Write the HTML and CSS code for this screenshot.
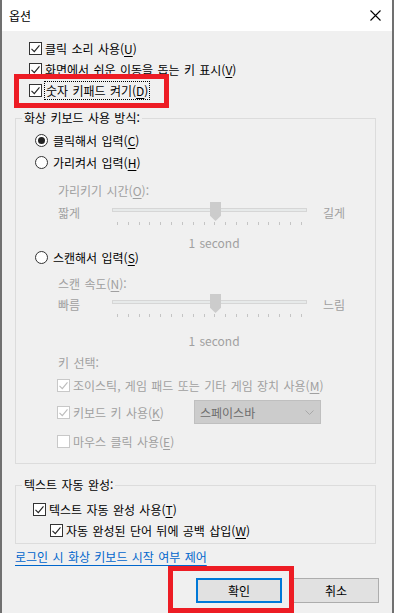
FILE: index.html
```html
<!DOCTYPE html>
<html lang="ko">
<head>
<meta charset="UTF-8">
<meta name="viewport" content="width=device-width, initial-scale=1.0">
<title>옵션</title>
<link rel="stylesheet" href="styles.css">
</head>
<body>
<div class="window">
  <div class="titlebar">
    <span class="title">옵션</span>
    <svg class="close" width="11" height="11" viewBox="0 0 11 11"><path d="M0.5 0.5L10.5 10.5M10.5 0.5L0.5 10.5" stroke="#000" stroke-width="1.1" fill="none"/></svg>
  </div>

  <div class="content">
    <div class="top-opts">
      <label class="opt"><span class="cb"><svg viewBox="0 0 13 13"><path d="M2.5 6.8L5.3 9.6L10.5 3.4"/></svg></span><span>클릭 소리 사용(<u>U</u>)</span></label>
      <label class="opt"><span class="cb"><svg viewBox="0 0 13 13"><path d="M2.5 6.8L5.3 9.6L10.5 3.4"/></svg></span><span>화면에서 쉬운 이동을 돕는 키 표시(<u>V</u>)</span></label>
      <label class="opt"><span class="cb"><svg viewBox="0 0 13 13"><path d="M2.5 6.8L5.3 9.6L10.5 3.4"/></svg></span><span class="focus">숫자 키패드 켜기(<u>D</u>)</span></label>
    </div>

    <fieldset class="group group-mode">
      <legend>화상 키보드 사용 방식:</legend>
      <label class="radio-row r1"><span class="radio on"></span><span>클릭해서 입력(<u>C</u>)</span></label>
      <label class="radio-row r2"><span class="radio"></span><span>가리켜서 입력(<u>H</u>)</span></label>
      <div class="sub-label hover-label">가리키기 시간(<u>O</u>):</div>
      <div class="slider-row">
        <span class="end">짧게</span>
        <div class="slider">
          <div class="track"></div>
          <div class="ticks"><i></i><i></i><i></i><i></i><i></i><i></i><i></i><i></i><i></i><i></i><i></i><i></i><i></i><i></i><i></i><i></i><i></i><i></i></div>
          <div class="thumb"></div>
        </div>
        <span class="end end-right">길게</span>
      </div>
      <div class="value value-1">1 second</div>
      <label class="radio-row r3"><span class="radio"></span><span>스캔해서 입력(<u>S</u>)</span></label>
      <div class="sub-label scan-label">스캔 속도(<u>N</u>):</div>
      <div class="slider-row">
        <span class="end">빠름</span>
        <div class="slider">
          <div class="track"></div>
          <div class="ticks"><i></i><i></i><i></i><i></i><i></i><i></i><i></i><i></i><i></i><i></i><i></i><i></i><i></i><i></i><i></i><i></i><i></i><i></i></div>
          <div class="thumb"></div>
        </div>
        <span class="end end-right">느림</span>
      </div>
      <div class="value value-2">1 second</div>
      <div class="sub-label key-label">키 선택:</div>
      <label class="dis-row joy-row"><span class="cb dis"><svg viewBox="0 0 13 13"><path d="M2.5 6.8L5.3 9.6L10.5 3.4"/></svg></span><span>조이스틱, 게임 패드 또는 기타 게임 장치 사용(<u>M</u>)</span></label>
      <div class="dis-row kb-row">
        <label class="kb-label"><span class="cb dis"><svg viewBox="0 0 13 13"><path d="M2.5 6.8L5.3 9.6L10.5 3.4"/></svg></span><span>키보드 키 사용(<u>K</u>)</span></label>
        <div class="combo">
          <span>스페이스바</span>
          <svg width="9" height="5" viewBox="0 0 9 5"><path d="M0.5 0.5L4.5 4.5L8.5 0.5" stroke="#a8a8a8" fill="none"/></svg>
        </div>
      </div>
      <label class="dis-row mouse-row"><span class="cb dis empty"></span><span>마우스 클릭 사용(<u>E</u>)</span></label>
    </fieldset>

    <fieldset class="group group-text">
      <legend>텍스트 자동 완성:</legend>
      <label class="opt t1"><span class="cb"><svg viewBox="0 0 13 13"><path d="M2.5 6.8L5.3 9.6L10.5 3.4"/></svg></span><span>텍스트 자동 완성 사용(<u>T</u>)</span></label>
      <label class="opt t2"><span class="cb"><svg viewBox="0 0 13 13"><path d="M2.5 6.8L5.3 9.6L10.5 3.4"/></svg></span><span>자동 완성된 단어 뒤에 공백 삽입(<u>W</u>)</span></label>
    </fieldset>

    <a class="login-link" href="#">로그인 시 화상 키보드 시작 여부 제어</a>

    <div class="buttons">
      <button class="btn btn-ok">확인</button>
      <button class="btn">취소</button>
    </div>
  </div>

  <div class="mark mark-numpad"></div>
  <div class="mark mark-ok"></div>
</div>
</body>
</html>
```

FILE: styles.css
```css
body {
  margin: 0;
  font-family: "Noto Sans CJK KR", "Noto Sans", sans-serif;
  font-size: 12px;
  color: #000;
  background: #f0f0f0;
}
u {
  text-decoration-thickness: 1px;
  text-underline-offset: 2px;
}
.window {
  position: relative;
  width: 394px;
  height: 613px;
  box-sizing: border-box;
  border-left: 2px solid #707070;
  border-right: 2px solid #707070;
  background: #f0f0f0;
  overflow: hidden;
  word-spacing: 1px;
}
.titlebar {
  height: 31px;
  background: #fff;
  display: flex;
  align-items: center;
  justify-content: space-between;
  padding: 0 11px 0 7px;
}
.title {
  line-height: 31px;
}
.content {
  padding: 7px 13px 0;
}

/* checkboxes */
.opt {
  display: flex;
  align-items: center;
  height: 21px;
  gap: 3px;
  white-space: nowrap;
}
.top-opts .opt {
  padding-left: 14px;
}
.cb {
  width: 13px;
  height: 13px;
  box-sizing: border-box;
  border: 1px solid #333;
  background: #fff;
  flex: none;
  display: flex;
}
.cb svg {
  width: 11px;
  height: 11px;
  margin: 0;
  transform: translate(-1px, -1px) scale(1.18);
  transform-origin: 0 0;
  fill: none;
  stroke: #222;
  stroke-width: 1.15;
}
.cb.dis {
  border-color: #c8c8c8;
  background: #fff;
}
.cb.dis svg {
  stroke: #bcbcbc;
}
.focus {
  outline: 1px dotted #000;
  outline-offset: 0;
  padding: 0 1px;
  line-height: 17px;
}

/* group boxes */
.group {
  margin: 10px 3px 0 0;
  padding: 0 0 11px;
  border: 1px solid #dcdcdc;
  min-width: 0;
}
.group legend {
  margin-left: 6px;
  padding: 0 2px;
  line-height: 14px;
}
.radio-row {
  display: flex;
  align-items: center;
  gap: 5px;
  margin-left: 19px;
  white-space: nowrap;
}
.r1 { margin-top: 4px; height: 22px; }
.r2 { height: 23px; }
.r3 { height: 16px; }
.radio {
  width: 13px;
  height: 13px;
  box-sizing: border-box;
  border: 1px solid #333;
  border-radius: 50%;
  background: #fff;
  display: flex;
  align-items: center;
  justify-content: center;
}
.radio.on::after {
  content: "";
  width: 7px;
  height: 7px;
  border-radius: 50%;
  background: #222;
}
.sub-label {
  margin-left: 42px;
  color: #a0a0a0;
  height: 20px;
  line-height: 20px;
}
.hover-label { margin-top: 7px; }
.scan-label { margin-top: 9px; height: 19px; line-height: 19px; }
.key-label { margin-top: 6px; }

/* sliders */
.slider-row {
  display: flex;
  height: 26px;
  margin-left: 42px;
  color: #a0a0a0;
}
.end {
  width: 54px;
  line-height: 24px;
}
.end-right {
  width: auto;
  margin-left: 16px;
}
.slider {
  position: relative;
  width: 195px;
  height: 26px;
}
.track {
  margin-top: 7px;
  height: 4px;
  box-sizing: border-box;
  border: 1px solid #d6d6d6;
  background: #e7eaea;
}
.ticks {
  display: flex;
  justify-content: space-between;
  margin: 10px 5px 0;
}
.ticks i {
  width: 1px;
  height: 3px;
  background: #c4c4c4;
}
.thumb {
  position: absolute;
  left: 98px;
  top: 1px;
  width: 11px;
  height: 19px;
  background: #cccccc;
  clip-path: polygon(0 0, 100% 0, 100% 72%, 50% 100%, 0 72%);
}
.value {
  margin-left: 96px;
  width: 204px;
  text-align: center;
  color: #a0a0a0;
  height: 12px;
  line-height: 12px;
}
.value-1 { margin-top: 10px; }
.value-2 { margin-top: 16px; }

/* disabled key options */
.dis-row {
  display: flex;
  align-items: center;
  margin-left: 41px;
  color: #a0a0a0;
  white-space: nowrap;
}
.dis-row .cb {
  margin-right: 3px;
}
.joy-row { margin-top: 1px; height: 22px; }
.kb-row { margin-top: 4px; height: 24px; }
.mouse-row { margin-top: 6px; height: 22px; }
.kb-label {
  display: flex;
  align-items: center;
  width: 137px;
}
.combo {
  width: 127px;
  height: 24px;
  box-sizing: border-box;
  border: 1px solid #bfbfbf;
  background: #cccccc;
  color: #6d6d6d;
  display: flex;
  align-items: center;
  justify-content: space-between;
  padding: 0 6px 0 5px;
}

/* text completion */
.group-text {
  margin-top: 14px;
  padding-bottom: 2px;
}
.t1 { margin-top: 6px; height: 22px; padding-left: 17px; }
.t2 { height: 21px; padding-left: 34px; }

.login-link {
  display: inline-block;
  margin-top: 4px;
  line-height: 17px;
  color: #0066cc;
  text-decoration: underline;
  text-underline-offset: 3px;
}

/* buttons */
.buttons {
  display: flex;
  justify-content: flex-end;
  gap: 11px;
  margin-top: 13px;
}
.btn {
  width: 86px;
  height: 25px;
  font-family: inherit;
  font-size: 12px;
  background: #e1e1e1;
  border: 1px solid #adadad;
  padding: 0;
  color: #000;
}
.btn-ok {
  border: 2px solid #0078d7;
}

/* red annotation boxes */
.mark {
  position: absolute;
  box-sizing: border-box;
  border: 5px solid #ed1c24;
}
.mark-numpad {
  left: 12px;
  top: 74px;
  width: 155px;
  height: 34px;
}
.mark-ok {
  left: 166px;
  top: 566px;
  width: 126px;
  height: 47px;
}
```
